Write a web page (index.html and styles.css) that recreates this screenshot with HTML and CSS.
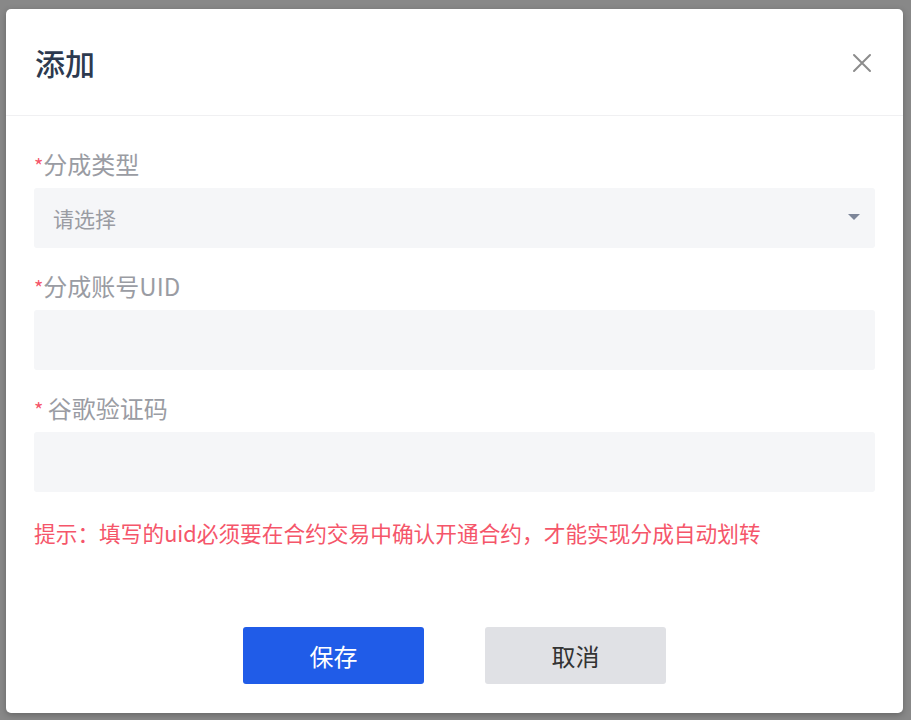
FILE: index.html
```html
<!DOCTYPE html>
<html lang="zh-CN">

<head>
    <meta charset="UTF-8">
    <meta name="viewport" content="width=device-width, initial-scale=1.0">
    <title>添加</title>
    <link rel="stylesheet" href="styles.css">
</head>

<body>
    <div class="modal">
        <div class="modal-header">
            <h1 class="modal-title">添加</h1>
            <button class="close-btn" type="button" aria-label="关闭">
                <svg width="20" height="20" viewBox="0 0 20 20">
                    <path d="M2 2 L18 18 M18 2 L2 18" stroke="#8c8c8c" stroke-width="2" stroke-linecap="round" fill="none" />
                </svg>
            </button>
        </div>

        <form class="modal-body" id="addForm">
            <div class="form-item">
                <label class="form-label"><span class="required">*</span>分成类型</label>
                <div class="select-box">
                    <span class="placeholder">请选择</span>
                    <span class="caret"></span>
                </div>
            </div>

            <div class="form-item">
                <label class="form-label"><span class="required">*</span>分成账号UID</label>
                <input class="form-input" type="text">
            </div>

            <div class="form-item">
                <label class="form-label"><span class="required">* </span>谷歌验证码</label>
                <input class="form-input" type="text">
            </div>

            <p class="hint">提示：填写的uid必须要在合约交易中确认开通合约，才能实现分成自动划转</p>

            <div class="modal-footer">
                <button class="btn btn-primary" type="submit">保存</button>
                <button class="btn btn-default" type="button">取消</button>
            </div>
        </form>
    </div>
</body>

</html>
```

FILE: styles.css
```css
html,
body {
    height: 100%;
}

body {
    margin: 0;
    padding: 9px 8px 7px 6px;
    box-sizing: border-box;
    background-color: #888888;
    font-family: "Noto Sans CJK SC", "Noto Sans", sans-serif;
}

.modal {
    width: 897px;
    height: 704px;
    background: white;
    border-radius: 5px;
    box-shadow: 0 2px 6px rgba(0, 0, 0, 0.25);
    display: flex;
    flex-direction: column;
}

.modal-header {
    height: 106px;
    display: flex;
    align-items: center;
    justify-content: space-between;
    padding: 0 31px 0 29px;
    border-bottom: 1px solid #f0f0f2;
}

.modal-title {
    margin: 0;
    font-size: 30px;
    font-weight: 500;
    color: #2d3a4f;
}

.close-btn {
    background: none;
    border: none;
    padding: 0;
    margin-top: 2px;
    cursor: pointer;
    display: flex;
}

.modal-body {
    padding: 28px 28px 0;
    display: flex;
    flex-direction: column;
}

.form-item {
    margin-bottom: 18px;
}

.form-label {
    display: block;
    height: 40px;
    line-height: 40px;
    margin-bottom: 4px;
    font-size: 24px;
    color: #9a9ca3;
}

.required {
    color: #f5566a;
    font-size: 20px;
}

.select-box,
.form-input {
    display: flex;
    align-items: center;
    width: 100%;
    height: 60px;
    box-sizing: border-box;
    background-color: #f5f6f8;
    border: none;
    border-radius: 3px;
    padding: 0 15px 0 19px;
    outline: none;
}

.select-box {
    justify-content: space-between;
    cursor: pointer;
}

.placeholder {
    font-size: 21px;
    color: #9a9ca3;
}

.caret {
    width: 0;
    height: 0;
    border-left: 6px solid transparent;
    border-right: 6px solid transparent;
    border-top: 6px solid #7d8699;
    margin-top: -2px;
}

.hint {
    margin: 8px 0 0;
    line-height: 30px;
    font-size: 21.7px;
    color: #f5566a;
}

.modal-footer {
    display: flex;
    justify-content: center;
    gap: 61px;
    margin-top: 79px;
}

.btn {
    width: 181px;
    height: 57px;
    border: none;
    border-radius: 3px;
    font-family: inherit;
    font-size: 24px;
    cursor: pointer;
}

.btn-primary {
    background-color: #205ce8;
    color: white;
}

.btn-default {
    background-color: #e0e1e5;
    color: #333333;
}
```
